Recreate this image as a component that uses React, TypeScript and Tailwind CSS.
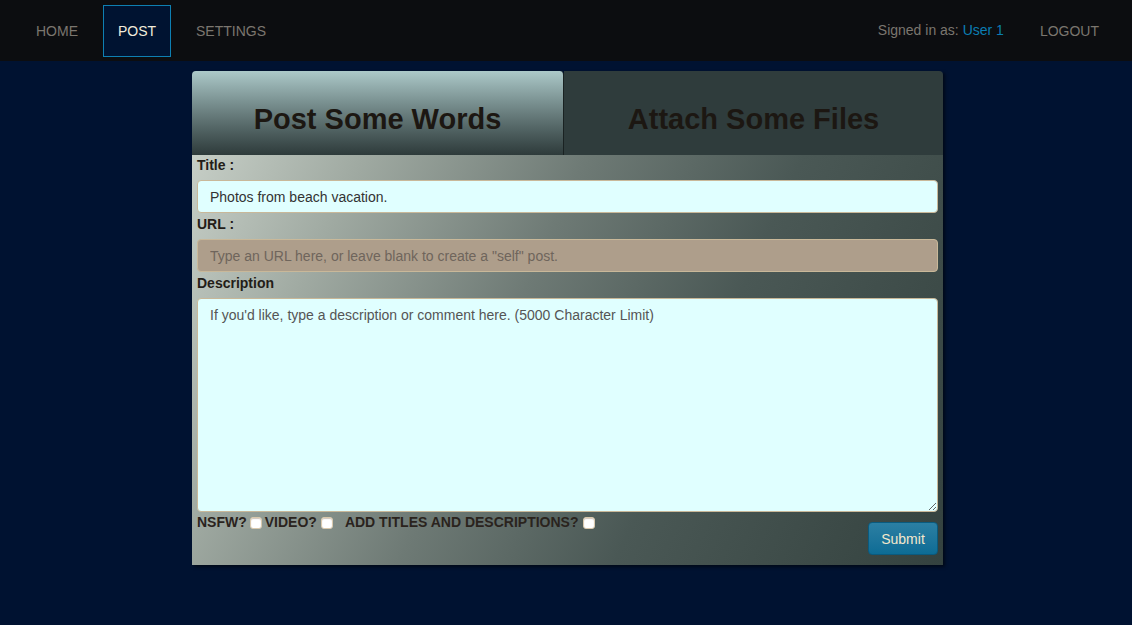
import { useState } from "react";

const navLink = "px-[15px] h-[52px] flex items-center text-[14px] leading-none";

function Check({ checked, onChange }: { checked: boolean; onChange: () => void }) {
    return (
        <input
            type="checkbox"
            checked={checked}
            onChange={onChange}
            className="appearance-none w-[12px] h-[12px] rounded-[3px] bg-white border border-[#d9c9ad] shadow-[inset_0_1px_1px_rgba(120,90,60,0.35)] checked:bg-[#0b7db3]"
        />
    );
}

export default function App() {
    const [tab, setTab] = useState<"words" | "files">("words");
    const [title, setTitle] = useState("Photos from beach vacation.");
    const [flags, setFlags] = useState({ nsfw: false, video: false, titles: false });

    const toggle = (key: keyof typeof flags) => setFlags((prev) => ({ ...prev, [key]: !prev[key] }));

    return (
        <div className="min-h-[625px] bg-[#001231] font-['Liberation_Sans',Arial,sans-serif]">
            <nav className="h-[61px] bg-[#0c0d10] flex items-center justify-between pl-[21px] pr-[18px]">
                <div className="flex items-center gap-[10px]">
                    <a className={`${navLink} text-[#7b766f]`}>HOME</a>
                    <a className={`${navLink} text-[#f2ecdc] bg-[#001331] border border-[#0e7fb2] w-[68px] justify-center px-0`}>
                        POST
                    </a>
                    <a className={`${navLink} text-[#7b766f]`}>SETTINGS</a>
                </div>
                <div className="flex items-center gap-[21px]">
                    <p className="text-[14px] text-[#7b766f]">
                        Signed in as: <span className="text-[#0b7db3]">User 1</span>
                    </p>
                    <a className={`${navLink} text-[#7b766f]`}>LOGOUT</a>
                </div>
            </nav>

            <div className="pt-[10px]">
                <div className="w-[751px] ml-[192px] shadow-[2px_2px_3px_rgba(0,0,0,0.5)]">
                    <div className="flex h-[84px]">
                        <button
                            onClick={() => setTab("words")}
                            className={`w-[372px] pt-[14px] rounded-tl-[4px] rounded-tr-[4px] border-r border-[#1a2222] text-[29px] font-bold text-[#1c1712] ${tab === "words" ? "bg-gradient-to-b from-[#acc9c9] to-[#2e3b3b]" : "bg-[#2f3c3c]"}`}
                        >
                            Post Some Words
                        </button>
                        <button
                            onClick={() => setTab("files")}
                            className={`flex-1 pt-[14px] rounded-tr-[4px] text-[29px] font-bold text-[#1c1712] ${tab === "files" ? "bg-gradient-to-b from-[#acc9c9] to-[#2e3b3b]" : "bg-[#2f3c3c]"}`}
                        >
                            Attach Some Files
                        </button>
                    </div>

                    <form
                        onSubmit={(e) => e.preventDefault()}
                        className="px-[5px] pb-[10px] bg-[linear-gradient(115deg,#c6cec6_0%,#a0aaa2_18%,#6e7a75_42%,#4a5855_65%,#34423f_100%)] text-[#231d18]"
                    >
                        <label className="block text-[14px] font-bold leading-[20px]">Title :</label>
                        <input
                            value={title}
                            onChange={(e) => setTitle(e.target.value)}
                            className="mt-[5px] mb-[1px] w-full h-[33px] px-[12px] rounded-[4px] bg-[#e0ffff] border border-[#c9b899] text-[14px] text-[#333] outline-none"
                        />

                        <label className="block text-[14px] font-bold leading-[20px]">URL :</label>
                        <input
                            placeholder={'Type an URL here, or leave blank to create a "self" post.'}
                            className="mt-[5px] mb-[1px] w-full h-[33px] px-[12px] rounded-[4px] bg-[#ae9e8b] border border-[#c9b899] text-[14px] text-[#333] placeholder:text-[#6f655c] outline-none"
                        />

                        <label className="block text-[14px] font-bold leading-[20px]">Description</label>
                        <textarea
                            placeholder="If you'd like, type a description or comment here. (5000 Character Limit)"
                            className="mt-[5px] block w-full h-[214px] px-[12px] py-[6px] rounded-[4px] bg-[#e0ffff] border border-[#c9b899] text-[14px] leading-[20px] text-[#333] placeholder:text-[#555] outline-none"
                        />

                        <div className="flex justify-between items-start">
                            <div className="flex items-center h-[21px] text-[14px] font-bold text-[#2a231d]">
                                <span>NSFW?</span>
                                <span className="ml-[3px] flex"><Check checked={flags.nsfw} onChange={() => toggle("nsfw")} /></span>
                                <span className="ml-[3px]">VIDEO?</span>
                                <span className="ml-[4px] flex"><Check checked={flags.video} onChange={() => toggle("video")} /></span>
                                <span className="ml-[12px]">ADD TITLES AND DESCRIPTIONS?</span>
                                <span className="ml-[4px] flex"><Check checked={flags.titles} onChange={() => toggle("titles")} /></span>
                            </div>
                            <button
                                type="submit"
                                className="mt-[10px] w-[70px] h-[33px] pt-[1px] rounded-[4px] bg-gradient-to-b from-[#2b7fa3] to-[#0c6c95] border border-[#0a5a7e] text-[14px] text-[#f3e8cc]"
                            >
                                Submit
                            </button>
                        </div>
                    </form>
                </div>
            </div>
        </div>
    );
}
